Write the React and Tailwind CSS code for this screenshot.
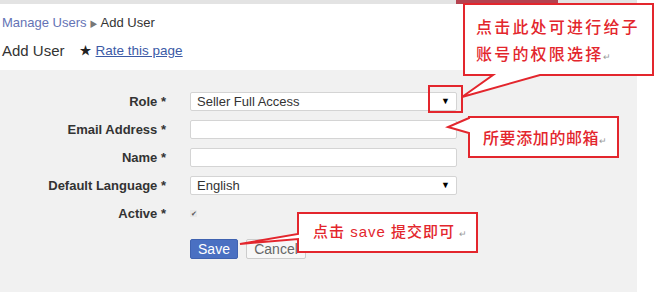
import React from "react";

const fields = [
  { label: "Role *", type: "select", value: "Seller Full Access" },
  { label: "Email Address *", type: "input" },
  { label: "Name *", type: "input" },
  { label: "Default Language *", type: "select", value: "English" },
];

const Callouts = () => (
  <>
    <svg
      className="absolute inset-0 pointer-events-none"
      width="655"
      height="292"
      viewBox="0 0 655 292"
    >
      <g fill="#fff" stroke="#e3262d" strokeWidth="2">
        <path d="M464,4 H653 V75 H540 L462,97 L493,75 H464 Z" />
        <path d="M469,117 H618 V157 H469 V133 L448,127 L469,118 Z" />
        <path d="M298,213 H477 V252 H298 V239 L240,244 L298,234 Z" />
      </g>
      <rect x="429" y="86" width="33" height="26" fill="none" stroke="#e3262d" strokeWidth="2" />
    </svg>
    <div className="absolute left-[476px] top-[14px] text-[16px] font-medium leading-[27px] tracking-[2.2px] text-[#e3262d]">
      <div>点击此处可进行给子</div>
      <div>
        账号的权限选择<span className="text-[9px] font-normal text-[#999] tracking-normal">↵</span>
      </div>
    </div>
    <div className="absolute left-[483px] top-[128px] text-[16px] font-medium leading-[22px] tracking-[0.6px] text-[#e3262d]">
      所要添加的邮箱<span className="text-[9px] font-normal text-[#999] tracking-normal">↵</span>
    </div>
    <div className="absolute left-[313px] top-[222px] text-[15px] font-medium leading-[20px] tracking-[1px] text-[#e3262d]">
      点击 save 提交即可<span className="ml-1 text-[9px] font-normal text-[#999] tracking-normal">↵</span>
    </div>
  </>
);

const App = () => {
  return (
    <div
      className="relative w-[655px] h-[292px] overflow-hidden bg-white text-[#333]"
      style={{ fontFamily: '"Liberation Sans", Arial, "Noto Sans CJK SC", sans-serif' }}
    >
      <div className="flex w-[637px] h-[4px] bg-[#e3e3e3]">
        <div className="ml-[456px] w-[102px] bg-[#b5424f]" />
      </div>

      <div className="pl-[2px] pt-[11px] text-[13px] leading-[16px]">
        <span className="text-[#6473b5]">Manage Users</span>
        <span className="mx-[3px] text-[8px] text-[#777]">▶</span>
        <span>Add User</span>
      </div>
      <div className="flex items-start pl-[2px] pt-[9px] h-[37px]">
        <span className="text-[15px] leading-[18px]">Add User</span>
        <span className="ml-[15px] text-[12px] leading-[18px] text-[#222]">★</span>
        <span className="ml-[4px] text-[13.5px] leading-[18px] text-[#3b5aa6] underline">
          Rate this page
        </span>
      </div>

      <div className="w-[637px] h-[224px] bg-[#f1f1f1] pt-[22px]">
        <div className="flex flex-col gap-[9px]">
          {fields.map((f) => (
            <div key={f.label} className="flex items-center h-[19px]">
              <div className="w-[166px] text-right text-[13px] font-bold">{f.label}</div>
              <div className="ml-[24px] w-[267px] h-[19px] flex items-center bg-white border border-[#d4d4d4] rounded-[2px] pl-[6px] pr-[6px] text-[13px]">
                <span className="flex-1">{f.value}</span>
                {f.type === "select" && <span className="text-[9px] text-black">▼</span>}
              </div>
            </div>
          ))}
          <div className="flex items-center h-[19px]">
            <div className="w-[166px] text-right text-[13px] font-bold">Active *</div>
            <div className="ml-[24px] w-[7px] h-[7px] flex items-center justify-center text-[7px] leading-none text-[#555] bg-[#e8e8e8]">
              ✔
            </div>
          </div>
        </div>
        <div className="flex mt-[16px] ml-[190px] gap-[8px]">
          <button className="w-[48px] h-[20px] bg-[#4a70c2] border border-[#3f62b0] rounded-[2px] text-white text-[14px] leading-[18px]">
            Save
          </button>
          <button className="w-[60px] h-[20px] bg-[#f7f7f7] border border-[#ccc] rounded-[2px] text-[#666] text-[14px] leading-[18px]">
            Cancel
          </button>
        </div>
      </div>

      <Callouts />
    </div>
  );
};

export default App;
